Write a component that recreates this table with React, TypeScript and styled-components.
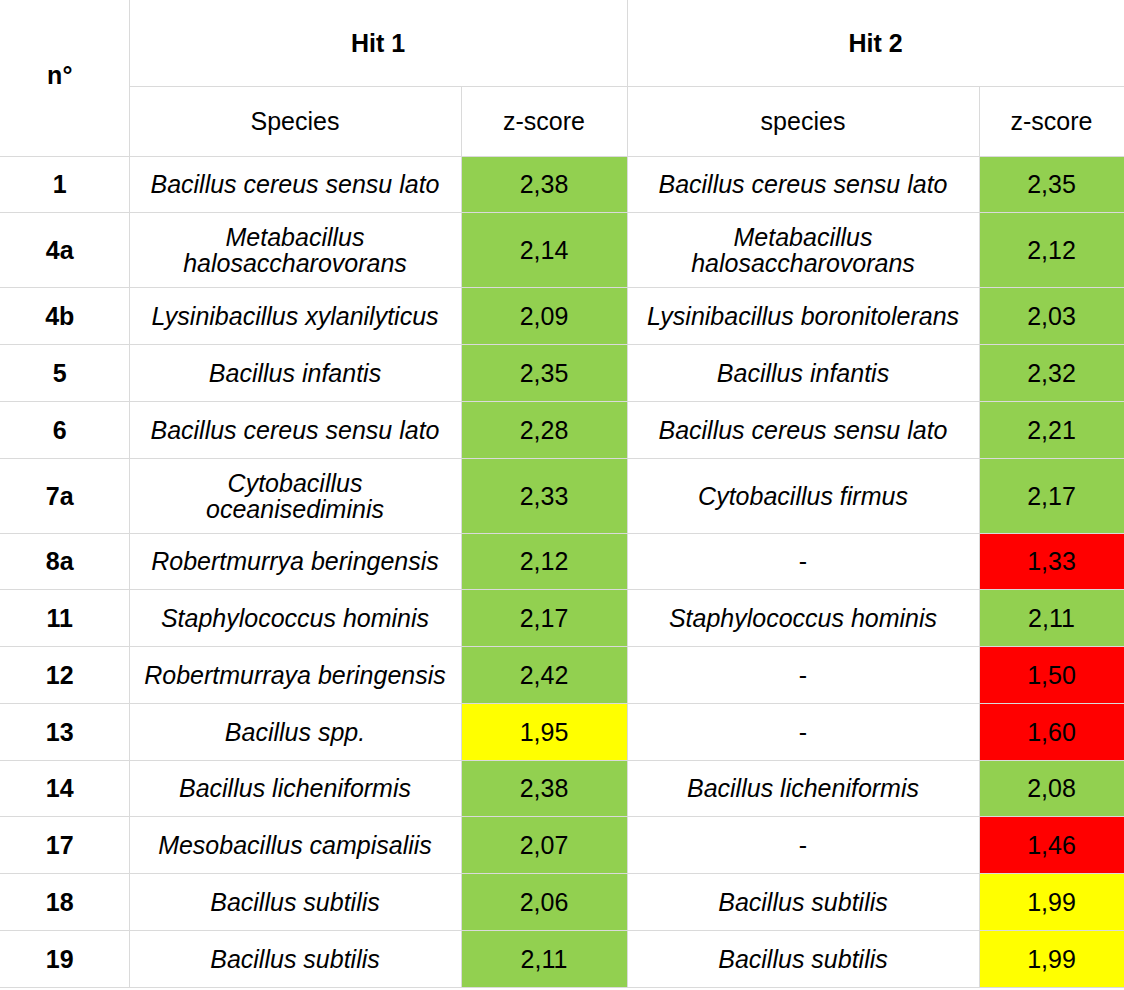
import React from "react";
import styled, { createGlobalStyle } from "styled-components";

const Global = createGlobalStyle`
  html, body { margin: 0; padding: 0; background: #ffffff; }
  body { font-family: "Liberation Sans", Arial, sans-serif; color: #000; }
`;

const Table = styled.table`
  width: 1124px;
  table-layout: fixed;
  border-collapse: collapse;
  font-family: "Liberation Sans", Arial, sans-serif;
  font-size: 25px;
  line-height: 26px;
`;

const HeadRow = styled.tr<{ $h: number }>`
  height: ${(p) => p.$h}px;
`;

const Row = styled.tr`
  height: 56.75px;
`;

const Th = styled.th<{ $bold?: boolean; $topDark?: boolean; $leftDark?: boolean; $lead?: boolean }>`
  font-weight: ${(p) => (p.$bold ? 700 : 400)};
  text-align: center;
  vertical-align: middle;
  padding: ${(p) => (p.$lead ? "0 17px 6px 8px" : "0 8px")};
  border: 1px solid #dadada;
  border-top: ${(p) => (p.$topDark ? "1px solid #c2c2c2" : "none")};
  ${(p) => (p.$leftDark ? "border-left: 1px solid #c2c2c2;" : "")}
  ${(p) => (p.$lead ? "border-left: none;" : "")}
`;

type Tone = "green" | "yellow" | "red" | "none";
const toneColor: Record<Tone, string> = {
  green: "#92d050",
  yellow: "#ffff00",
  red: "#ff0000",
  none: "transparent",
};

const Td = styled.td<{ $tone?: Tone; $bold?: boolean; $italic?: boolean }>`
  text-align: center;
  vertical-align: middle;
  padding: 11px 8px;
  border: 1px solid #dadada;
  background: ${(p) => toneColor[p.$tone ?? "none"]};
  font-weight: ${(p) => (p.$bold ? 700 : 400)};
  font-style: ${(p) => (p.$italic ? "italic" : "normal")};
  &:first-child { border-left: none; padding: 11px 17px 11px 8px; }
`;

type Data = {
  n: string;
  s1: string;
  z1: string;
  t1: Tone;
  s2: string;
  z2: string;
  t2: Tone;
};

const rows: Data[] = [
  { n: "1", s1: "Bacillus cereus sensu lato", z1: "2,38", t1: "green", s2: "Bacillus cereus sensu lato", z2: "2,35", t2: "green" },
  { n: "4a", s1: "Metabacillus halosaccharovorans", z1: "2,14", t1: "green", s2: "Metabacillus halosaccharovorans", z2: "2,12", t2: "green" },
  { n: "4b", s1: "Lysinibacillus xylanilyticus", z1: "2,09", t1: "green", s2: "Lysinibacillus boronitolerans", z2: "2,03", t2: "green" },
  { n: "5", s1: "Bacillus infantis", z1: "2,35", t1: "green", s2: "Bacillus infantis", z2: "2,32", t2: "green" },
  { n: "6", s1: "Bacillus cereus sensu lato", z1: "2,28", t1: "green", s2: "Bacillus cereus sensu lato", z2: "2,21", t2: "green" },
  { n: "7a", s1: "Cytobacillus oceanisediminis", z1: "2,33", t1: "green", s2: "Cytobacillus firmus", z2: "2,17", t2: "green" },
  { n: "8a", s1: "Robertmurrya beringensis", z1: "2,12", t1: "green", s2: "-", z2: "1,33", t2: "red" },
  { n: "11", s1: "Staphylococcus hominis", z1: "2,17", t1: "green", s2: "Staphylococcus hominis", z2: "2,11", t2: "green" },
  { n: "12", s1: "Robertmurraya beringensis", z1: "2,42", t1: "green", s2: "-", z2: "1,50", t2: "red" },
  { n: "13", s1: "Bacillus spp.", z1: "1,95", t1: "yellow", s2: "-", z2: "1,60", t2: "red" },
  { n: "14", s1: "Bacillus licheniformis", z1: "2,38", t1: "green", s2: "Bacillus licheniformis", z2: "2,08", t2: "green" },
  { n: "17", s1: "Mesobacillus campisaliis", z1: "2,07", t1: "green", s2: "-", z2: "1,46", t2: "red" },
  { n: "18", s1: "Bacillus subtilis", z1: "2,06", t1: "green", s2: "Bacillus subtilis", z2: "1,99", t2: "yellow" },
  { n: "19", s1: "Bacillus subtilis", z1: "2,11", t1: "green", s2: "Bacillus subtilis", z2: "1,99", t2: "yellow" },
];

export default function App() {
  return (
    <>
      <Global />
      <Table>
        <colgroup>
          <col style={{ width: 129 }} />
          <col style={{ width: 332 }} />
          <col style={{ width: 166 }} />
          <col style={{ width: 352 }} />
          <col style={{ width: 145 }} />
        </colgroup>
        <thead>
          <HeadRow $h={86}>
            <Th $bold $lead rowSpan={2}>n°</Th>
            <Th $bold colSpan={2}>Hit 1</Th>
            <Th $bold colSpan={2}>Hit 2</Th>
          </HeadRow>
          <HeadRow $h={70}>
            <Th $topDark>Species</Th>
            <Th $topDark $leftDark>z-score</Th>
            <Th $topDark $leftDark>species</Th>
            <Th $topDark $leftDark>z-score</Th>
          </HeadRow>
        </thead>
        <tbody>
          {rows.map((r) => (
            <Row key={r.n}>
              <Td $bold>{r.n}</Td>
              <Td $italic={r.s1 !== "-"}>{r.s1}</Td>
              <Td $tone={r.t1}>{r.z1}</Td>
              <Td $italic={r.s2 !== "-"}>{r.s2}</Td>
              <Td $tone={r.t2}>{r.z2}</Td>
            </Row>
          ))}
        </tbody>
      </Table>
    </>
  );
}
